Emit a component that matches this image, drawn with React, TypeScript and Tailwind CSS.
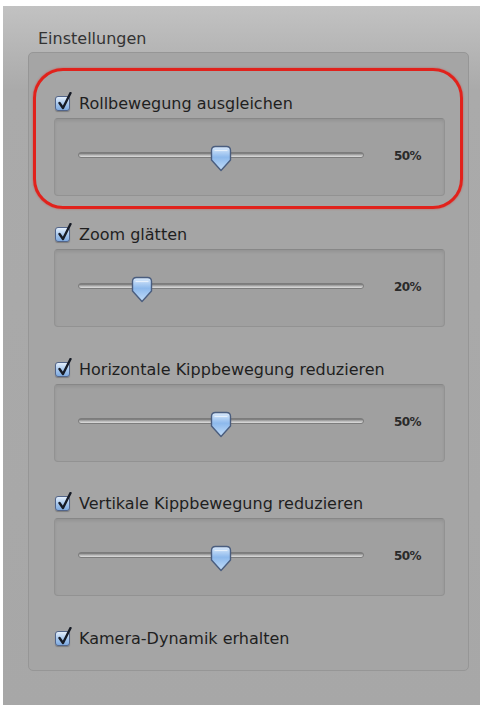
import React from 'react';

interface SettingItem {
  label: string;
  value?: number;
  gap: number;
}

const items: SettingItem[] = [
  { label: 'Rollbewegung ausgleichen', value: 50, gap: 0 },
  { label: 'Zoom glätten', value: 20, gap: 30 },
  { label: 'Horizontale Kippbewegung reduzieren', value: 50, gap: 34 },
  { label: 'Vertikale Kippbewegung reduzieren', value: 50, gap: 33 },
  { label: 'Kamera-Dynamik erhalten', gap: 34 },
];

const TRACK_WIDTH = 286;
const THUMB_WIDTH = 22;

// Aqua-style checked checkbox
const Checkbox: React.FC = () => (
  <div className="relative w-[15px] h-[15px] shrink-0 rounded-[3px] border border-[#52658a] bg-gradient-to-b from-[#e4effc] via-[#a9c9ee] to-[#7eaae0] shadow-[0_1px_1px_rgba(0,0,0,0.25)]">
    <svg className="absolute left-[1px] top-[-5px]" width="16" height="19" viewBox="0 0 16 19" fill="none">
      <path d="M2.5 11 L6 16 L13.5 1" stroke="#161b26" strokeWidth="2.4" strokeLinecap="round" strokeLinejoin="round" />
    </svg>
  </div>
);

// Shield-shaped slider knob
const Thumb: React.FC = () => (
  <svg width={THUMB_WIDTH} height="27" viewBox="0 0 22 27">
    <defs>
      <linearGradient id="knob" x1="0" y1="0" x2="0" y2="1">
        <stop offset="0" stopColor="#dcebfc" />
        <stop offset="0.45" stopColor="#8db9ec" />
        <stop offset="1" stopColor="#c2ddf9" />
      </linearGradient>
    </defs>
    <path
      d="M5.5 1.5 H16.5 Q20.5 1.5 20.5 5.5 V15 L11 25.5 L1.5 15 V5.5 Q1.5 1.5 5.5 1.5 Z"
      fill="url(#knob)"
      stroke="#4a5d7e"
      strokeWidth="1.4"
      strokeLinejoin="round"
    />
    <path d="M4.5 5.5 H17.5" stroke="#ffffff" strokeOpacity="0.6" strokeWidth="1.2" />
  </svg>
);

const Slider: React.FC<{ value: number }> = ({ value }) => {
  const left = (value / 100) * (TRACK_WIDTH - THUMB_WIDTH);
  return (
    <div className="h-[78px] rounded-[4px] border border-[#929292] border-t-[#878787] bg-[#a0a0a0] shadow-[inset_0_2px_3px_rgba(0,0,0,0.08)] pl-[23px] pr-[23px] pt-[26px] flex items-start">
      <div className="relative w-[286px] h-[27px] shrink-0">
        <div className="absolute left-0 right-0 top-[7px] h-[6px] rounded-full bg-gradient-to-b from-[#707070] via-[#b4b4b4] to-[#dedede] border border-[#7c7c7c]" />
        <div className="absolute top-0" style={{ left }}>
          <Thumb />
        </div>
      </div>
      <span className="ml-auto mt-[2px] text-[12px] font-bold text-[#2a2a2a] font-['DejaVu_Sans',sans-serif] tracking-[-0.6px]">
        {value}%
      </span>
    </div>
  );
};

export default function App() {
  return (
    <div className="w-[482px] h-[707px] bg-white pt-[6px] pl-[3px] pr-[2px] pb-[2px]">
      <div className="h-full bg-gradient-to-b from-[#c2c2c2] via-[#aaaaaa] via-[12%] to-[#a7a7a7] pt-[23px] pl-[25px] pr-[11px] font-['DejaVu_Sans',sans-serif] text-[#262626]">
        <div className="pl-[10px] text-[16px] leading-[19px] text-[#333333] mb-[4px]">Einstellungen</div>
        <div className="relative h-[619px] rounded-[5px] border border-[#969696] bg-[#a5a5a5] pl-[25px] pr-[23px] pt-[42px]">
          <div className="absolute left-[4px] top-[15px] w-[430px] h-[141px] rounded-[30px] border-[3px] border-[#e1221c] shadow-[0_0_2px_rgba(225,34,28,0.6)] pointer-events-none" />
          <div className="flex flex-col">
            {items.map((item) => (
              <div key={item.label} className="flex flex-col gap-[6px]" style={{ marginTop: item.gap }}>
                <div className="flex items-center gap-[9px] pl-[1px] h-[17px]">
                  <Checkbox />
                  <span className="text-[16px] leading-[17px] text-[#1f1f1f]">{item.label}</span>
                </div>
                {item.value !== undefined && <Slider value={item.value} />}
              </div>
            ))}
          </div>
        </div>
      </div>
    </div>
  );
}
